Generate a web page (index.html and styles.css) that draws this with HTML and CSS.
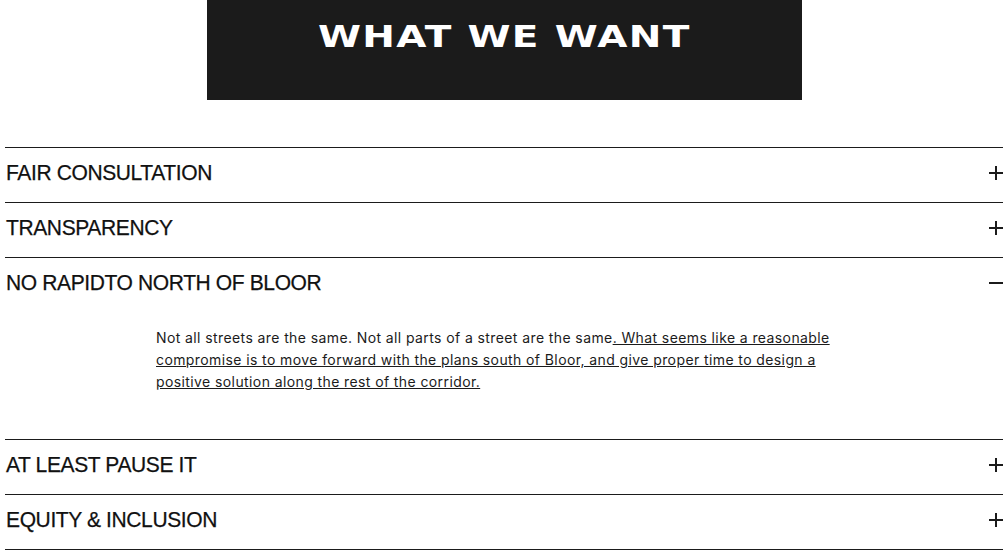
FILE: index.html
```html
<!DOCTYPE html>
<html>
<head>
<meta charset="utf-8">
<link rel="stylesheet" href="styles.css">
</head>
<body>
<div class="page">
  <div class="banner"><h1 class="banner-title"><span>WHAT WE WANT</span></h1></div>
  <div class="accordion">
    <div class="item">
      <div class="item-head"><span class="item-title">FAIR CONSULTATION</span>
        <svg class="icon" width="14" height="14" viewBox="0 0 14 14"><path d="M0 7H14M7 0V14" stroke="#1b1b1b" stroke-width="2"/></svg></div>
    </div>
    <div class="item">
      <div class="item-head"><span class="item-title">TRANSPARENCY</span>
        <svg class="icon" width="14" height="14" viewBox="0 0 14 14"><path d="M0 7H14M7 0V14" stroke="#1b1b1b" stroke-width="2"/></svg></div>
    </div>
    <div class="item open">
      <div class="item-head"><span class="item-title">NO RAPIDTO NORTH OF BLOOR</span>
        <svg class="icon" width="14" height="14" viewBox="0 0 14 14"><path d="M0 7H14" stroke="#1b1b1b" stroke-width="2"/></svg></div>
      <div class="item-body">
        <p class="body-text">Not all streets are the same. Not all parts of a street are the same<a class="link" href="#">. What seems like a reasonable compromise is to move forward with the plans south of Bloor, and give proper time to design a positive solution along the rest of the corridor.</a></p>
      </div>
    </div>
    <div class="item">
      <div class="item-head"><span class="item-title">AT LEAST PAUSE IT</span>
        <svg class="icon" width="14" height="14" viewBox="0 0 14 14"><path d="M0 7H14M7 0V14" stroke="#1b1b1b" stroke-width="2"/></svg></div>
    </div>
    <div class="item">
      <div class="item-head"><span class="item-title">EQUITY &amp; INCLUSION</span>
        <svg class="icon" width="14" height="14" viewBox="0 0 14 14"><path d="M0 7H14M7 0V14" stroke="#1b1b1b" stroke-width="2"/></svg></div>
    </div>
  </div>
</div>
</body>
</html>
```
FILE: styles.css
```css
html, body { margin: 0; padding: 0; background: #fff; }
body { font-family: "Liberation Sans", Arial, sans-serif; color: #1b1b1b; }
.page { padding: 0 5px; }
.banner {
  width: 595px; height: 100px; margin: 0 auto;
  background: #1b1b1b; display: flex; justify-content: center;
}
.banner-title {
  margin: 0; padding-top: 19px; color: #fff;
  font-family: "DejaVu Sans", sans-serif; font-weight: 700; font-size: 30px;
  line-height: 36px; letter-spacing: 1px;
}
.banner-title span { display: inline-block; transform: scaleX(1.3); }
.accordion { margin-top: 47px; border-bottom: 1px solid #1b1b1b; }
.item { border-top: 1px solid #1b1b1b; }
.item-head {
  height: 54px; display: flex; align-items: center; justify-content: space-between;
  padding: 0 0 0 1px;
}
.item-title {
  display: inline-block; font-size: 22px; letter-spacing: -0.4px; line-height: 1;
  margin-bottom: 5px; color: #111; transform: scaleX(0.955); transform-origin: left center;
  -webkit-text-stroke: 0.25px #111;
}
.icon { display: block; margin-bottom: 4px; }
.item-body { padding: 15px 0 46px 151px; }
.body-text {
  margin: 0; max-width: 680px; font-family: "Inter", sans-serif; font-size: 14px;
  letter-spacing: 0.4px; line-height: 22px; color: #1b1b1b;
}
.link { color: #1b1b1b; text-decoration: underline; }
```
